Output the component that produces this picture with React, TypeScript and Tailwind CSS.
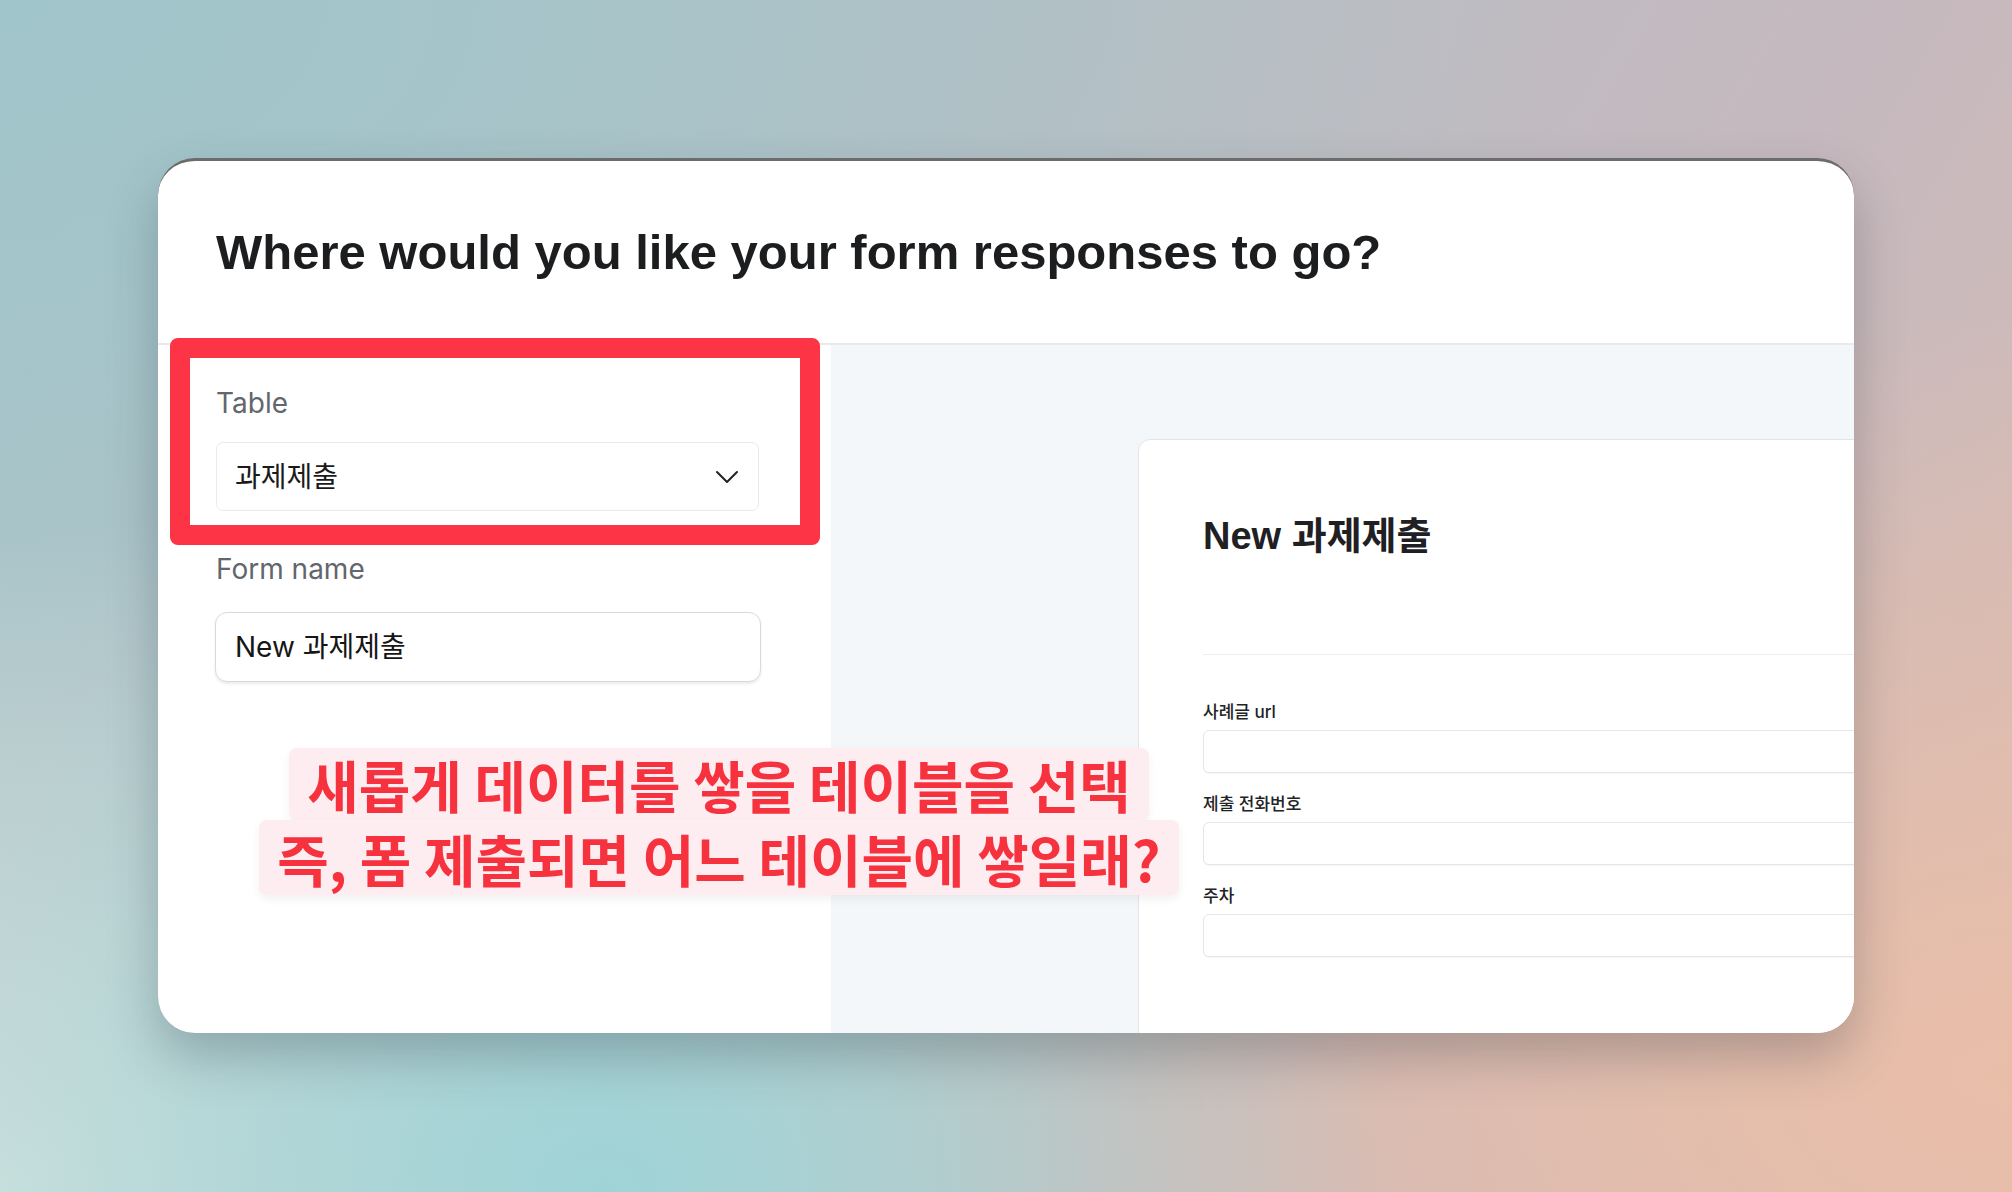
import { ChevronDown } from "lucide-react";

const Field = ({ label }: { label: string }) => (
  <div className="flex flex-col">
    <div className="text-[17px] leading-[20px] font-medium text-[#222326]">{label}</div>
    <div className="mt-[8px] h-[43px] w-full rounded-[6px] border border-[#e4e6e9] bg-white shadow-[0_1px_1px_rgba(0,0,0,0.04)]" />
  </div>
);

const App = () => {
  return (
    <div className="relative w-[2012px] h-[1192px] overflow-hidden pt-[158px] pl-[158px] bg-[radial-gradient(ellipse_at_30%_100%,#9fd4d7_0%,transparent_40%),radial-gradient(ellipse_at_0%_100%,#d2e2de_0%,transparent_40%),radial-gradient(ellipse_at_100%_90%,#e9bea9_0%,transparent_50%),radial-gradient(ellipse_at_0%_0%,#a0c5ca_0%,transparent_55%),linear-gradient(120deg,#a9c4c9_0%,#bcbec3_45%,#c5b9bf_70%,#d9bcb2_100%)]">
      {/* Main card */}
      <div className="relative w-[1696px] h-[875px] flex flex-col overflow-hidden rounded-[37px] border-t-[3px] border-t-[#6c6c6c] bg-white shadow-[0_24px_50px_rgba(40,50,60,0.28)]">
        {/* Header */}
        <div className="pl-[58px] pt-[67px] pb-[66px] border-b-2 border-[#e8eaed]">
          <h1 className="font-['Liberation_Sans','Noto_Sans_CJK_KR',sans-serif] text-[49px] leading-[49px] font-bold text-[#1c1d1f]">
            Where would you like your form responses to go?
          </h1>
        </div>

        {/* Body */}
        <div className="flex flex-1 min-h-0">
          {/* Left settings */}
          <div className="w-[673px] shrink-0 flex flex-col pl-[58px] pt-[41px] font-['Inter','Noto_Sans_CJK_KR',sans-serif]">
            <div className="text-[28px] leading-[34px] text-[#62666d]">Table</div>
            <div className="mt-[22px] h-[69px] w-[543px] flex items-center justify-between pl-[18px] pr-[11px] rounded-[7px] border border-[#ebebeb] bg-white">
              <span className="text-[28px] text-[#1b1b1b]">과제제출</span>
              <ChevronDown className="w-[40px] h-[40px] text-[#222]" strokeWidth={1.2} />
            </div>

            <div className="mt-[41px] text-[28px] leading-[34px] text-[#62666d]">Form name</div>
            <div className="mt-[26px] -ml-px h-[70px] w-[546px] flex items-center pl-[19px] rounded-[12px] border border-[#d9dadc] bg-white shadow-[0_2px_3px_rgba(0,0,0,0.08)]">
              <span className="text-[28px] text-[#161616]">New 과제제출</span>
            </div>
          </div>

          {/* Preview */}
          <div className="flex-1 min-w-0 overflow-hidden bg-[#f4f7f9] pl-[307px] pt-[94px]">
            <div className="w-[900px] h-[700px] rounded-tl-[12px] border border-[#e2e4e7] bg-white pl-[64px] pt-[77px]">
              <div className="font-['Liberation_Sans','Noto_Sans_CJK_KR',sans-serif] text-[38px] leading-[38px] font-bold text-[#1f2023]">
                New 과제제출
              </div>
              <div className="mt-[99px] h-px bg-[#eceef0]" />
              <div className="mt-[47px] flex flex-col gap-[21px] font-['Inter','Noto_Sans_CJK_KR',sans-serif]">
                <Field label="사례글 url" />
                <Field label="제출 전화번호" />
                <Field label="주차" />
              </div>
            </div>
          </div>
        </div>

        {/* Red highlight around the Table field */}
        <div className="absolute left-[12px] top-[177px] w-[650px] h-[207px] rounded-[8px] border-[20px] border-[#fc3446]" />

        {/* Annotation */}
        <div className="absolute left-[82px] top-[587px] w-[958px] flex flex-col items-center font-['Noto_Sans_CJK_KR',sans-serif] font-bold text-[56px] text-[#f7323f]">
          <div className="h-[72px] px-[18px] flex items-center rounded-[8px] bg-[#fdedf0] shadow-[0_4px_10px_rgba(0,0,0,0.05)]">
            새롭게 데이터를 쌓을 테이블을 선택
          </div>
          <div className="h-[75px] px-[18px] flex items-center rounded-[8px] bg-[#fdedf0] shadow-[0_4px_10px_rgba(0,0,0,0.06)]">
            즉, 폼 제출되면 어느 테이블에 쌓일래?
          </div>
        </div>
      </div>
    </div>
  );
};

export default App;
